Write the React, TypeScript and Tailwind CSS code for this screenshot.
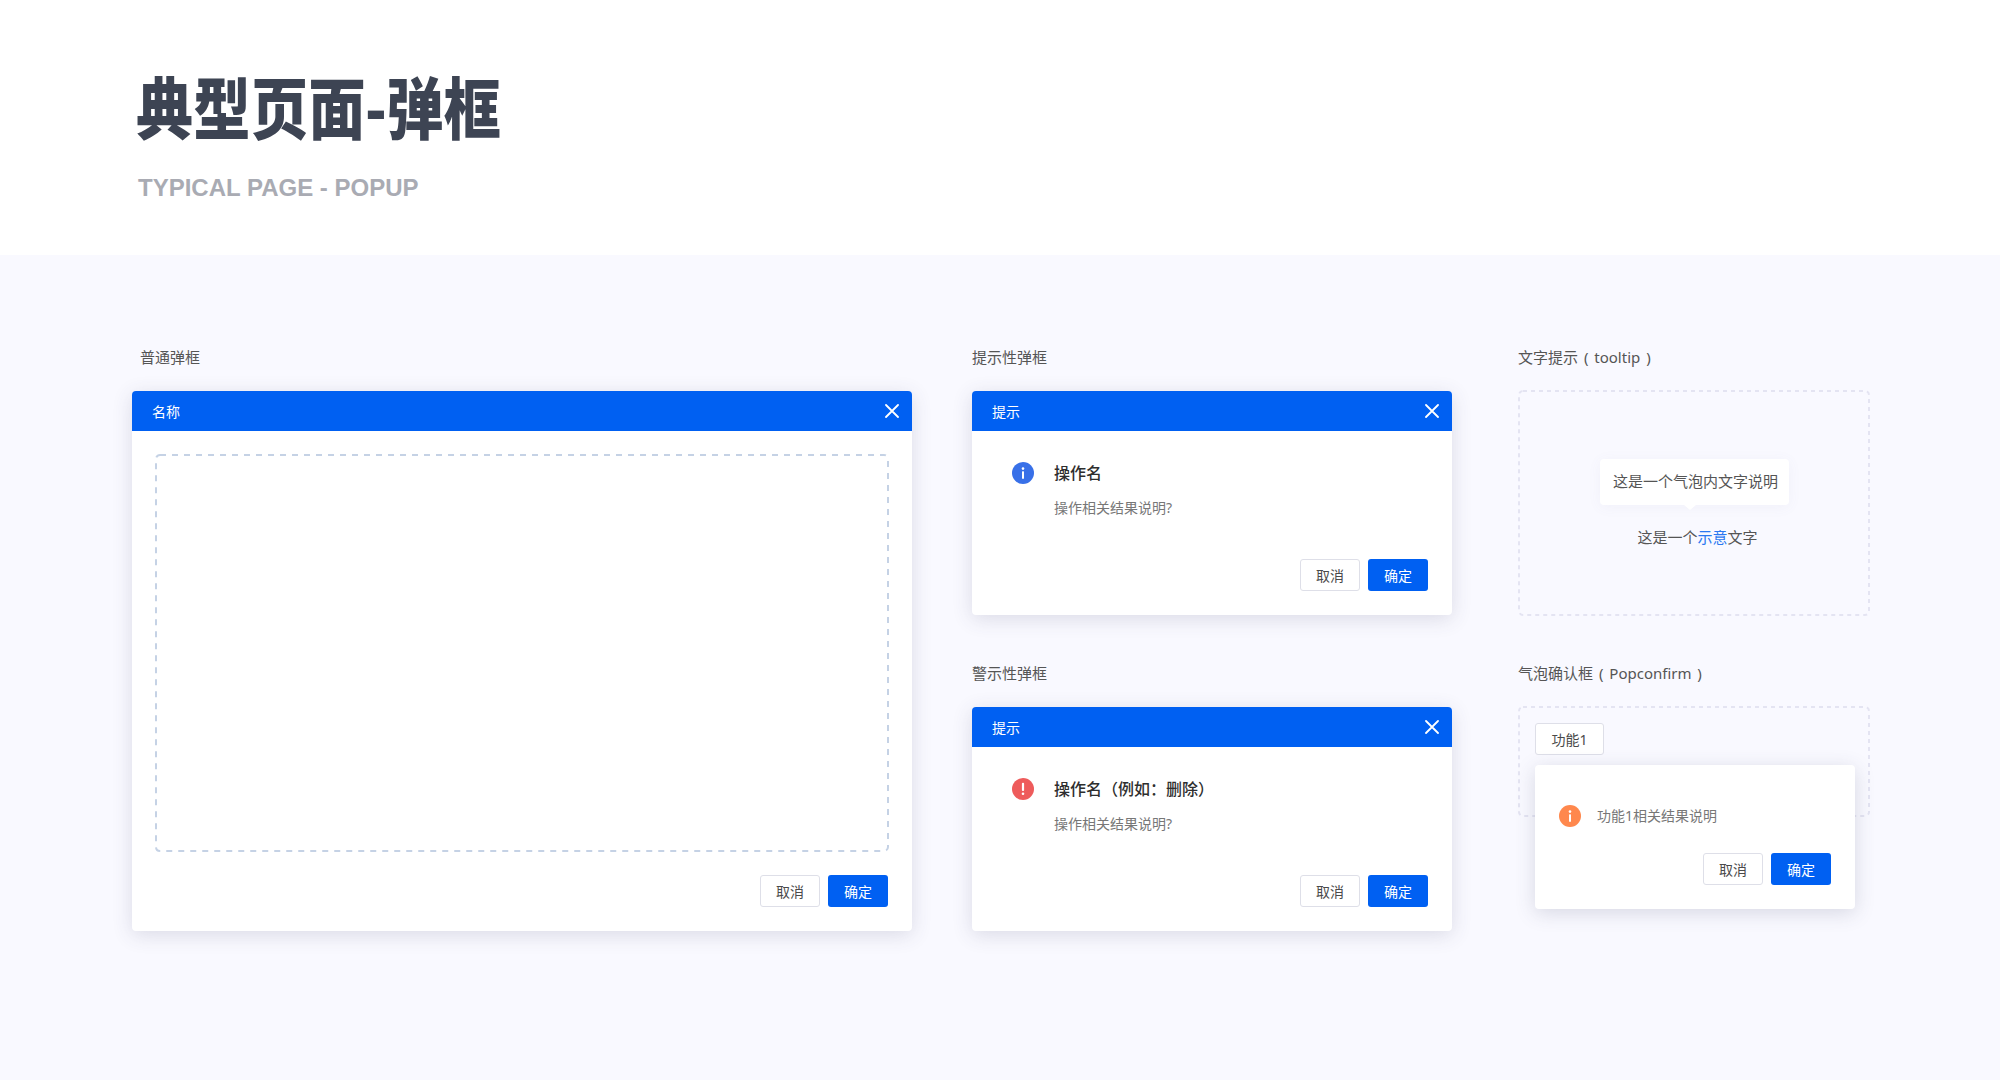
import React from "react";

const FONT = "font-['Noto_Sans','Noto_Sans_CJK_SC',sans-serif]";

function CloseIcon() {
  return (
    <svg width="14" height="14" viewBox="0 0 14 14" fill="none" className="block">
      <path d="M1 1L13 13M13 1L1 13" stroke="#ffffff" strokeWidth="1.8" strokeLinecap="round" />
    </svg>
  );
}

function DashedFrame({ w, h, color, dash }: { w: number; h: number; color: string; dash: string }) {
  return (
    <svg width={w} height={h} className="pointer-events-none absolute left-0 top-0 block" fill="none">
      <rect x="1" y="1" width={w - 2} height={h - 2} rx="4" stroke={color} strokeWidth="2" strokeDasharray={dash} />
    </svg>
  );
}

function Cancel() {
  return (
    <button className="h-8 w-[60px] rounded-[3px] border border-[#dedfe8] bg-white pt-[1px] text-[14px] leading-none text-[#4a4a4a]">
      取消
    </button>
  );
}

function Ok() {
  return (
    <button className="h-8 w-[60px] rounded-[3px] bg-[#0060f2] pt-[1px] text-[14px] leading-none text-white">
      确定
    </button>
  );
}

function Actions() {
  return (
    <div className="flex justify-end gap-2">
      <Cancel />
      <Ok />
    </div>
  );
}

function RoundIcon({ color, mark }: { color: string; mark: "i" | "!" }) {
  return (
    <svg width="22" height="22" viewBox="0 0 22 22" className="block shrink-0">
      <circle cx="11" cy="11" r="11" fill={color} />
      {mark === "i" ? (
        <>
          <circle cx="11" cy="6.6" r="1.3" fill="#fff" />
          <rect x="10" y="9.2" width="2" height="7.6" rx="0.6" fill="#fff" />
        </>
      ) : (
        <>
          <rect x="9.9" y="4.8" width="2.2" height="8.2" rx="1" fill="#fff" />
          <circle cx="11" cy="15.8" r="1.3" fill="#fff" />
        </>
      )}
    </svg>
  );
}

function Modal({ title, className, children }: { title: string; className: string; children: React.ReactNode }) {
  return (
    <div
      className={`flex flex-col overflow-hidden rounded-[4px] bg-white shadow-[0_4px_20px_rgba(60,64,100,0.16)] ${className}`}
    >
      <div className="flex h-10 shrink-0 items-center justify-between bg-[#0060f2] pl-5 pr-[13px] text-[14px] text-white">
        <span>{title}</span>
        <CloseIcon />
      </div>
      {children}
    </div>
  );
}

function Label({ children, className = "" }: { children: React.ReactNode; className?: string }) {
  return (
    <div className={`h-6 text-[15px] leading-[22px] text-[#555555] [word-spacing:2px] ${className}`}>{children}</div>
  );
}

function Notice({ title, color, mark }: { title: string; color: string; mark: "i" | "!" }) {
  return (
    <Modal title="提示" className="h-[224px] w-[480px]">
      <div className="flex flex-1 flex-col justify-between pb-6 pr-6 pl-10 pt-[31px]">
        <div className="flex gap-[21px]">
          <RoundIcon color={color} mark={mark} />
          <div className="-ml-[1px]">
            <div className="text-[16px] font-medium leading-[22px] text-[#2e2e2e]">{title}</div>
            <div className="mt-[13px] text-[14px] leading-[22px] text-[#777777]">操作相关结果说明?</div>
          </div>
        </div>
        <Actions />
      </div>
    </Modal>
  );
}

export default function App() {
  return (
    <div className={`min-h-[1080px] w-[2000px] bg-[#f9f9ff] ${FONT}`}>
      <header className="h-[255px] bg-white pl-[136px] pt-[62px]">
        <h1 className="h-[92px] origin-top scale-y-[1.18] font-['Noto_Sans_CJK_SC',sans-serif] text-[57px] font-black leading-[72px] tracking-[0.5px] text-[#3d4453]">
          典型页面<span className="-mx-[1px]">-</span>弹框
        </h1>
        <p className="ml-[2px] mt-[20px] font-['Liberation_Sans',sans-serif] text-[24px] font-bold leading-7 text-[#a9abb3]">
          TYPICAL PAGE - POPUP
        </p>
      </header>

      <main className="flex pl-[132px] pt-[91px]">
        <section className="w-[780px]">
          <Label className="mb-[21px] pl-2">普通弹框</Label>
          <Modal title="名称" className="h-[540px] w-[780px]">
            <div className="flex flex-1 flex-col pb-6 pl-[23px] pr-[23px] pt-[23px]">
              <div className="relative h-[398px]">
                <DashedFrame w={734} h={398} color="#c5d2e5" dash="6 6" />
              </div>
              <div className="mr-[1px] mt-auto">
                <Actions />
              </div>
            </div>
          </Modal>
        </section>

        <section className="ml-[60px] w-[480px]">
          <Label className="mb-[21px]">提示性弹框</Label>
          <Notice title="操作名" color="#3870e8" mark="i" />
          <Label className="mb-[21px] mt-[47px]">警示性弹框</Label>
          <Notice title="操作名（例如：删除）" color="#ee5b5b" mark="!" />
        </section>

        <section className="ml-[66px] w-[352px]">
          <Label className="mb-5">文字提示 ( tooltip )</Label>
          <div className="relative flex h-[226px] flex-col items-center justify-center">
            <DashedFrame w={352} h={226} color="#e4e4f2" dash="4 4" />
            <div className="relative flex h-[46px] w-[189px] items-center justify-center rounded-[4px] bg-white pl-[3px] text-[15px] text-[#555555] shadow-[0_2px_14px_rgba(100,110,160,0.06)]">
              这是一个气泡内文字说明
              <span className="absolute -bottom-[5px] left-[84px] h-0 w-0 border-x-[6px] border-t-[5px] border-x-transparent border-t-white" />
            </div>
            <div className="ml-[7px] mt-[21px] text-[15px] leading-[22px] text-[#555555]">
              这是一个<span className="text-[#2a78f0]">示意</span>文字
            </div>
          </div>

          <Label className="mb-5 mt-[46px]">气泡确认框 ( Popconfirm )</Label>
          <div className="relative h-[111px] pl-[17px] pt-[17px]">
            <DashedFrame w={352} h={111} color="#e4e4f2" dash="4 4" />
            <button className="relative block h-8 w-[69px] rounded-[3px] border border-[#dedfe8] bg-white pt-[1px] text-[14px] leading-none text-[#4a4a4a]">
              功能1
            </button>
            <div className="absolute left-[17px] top-[59px] flex h-[144px] w-[320px] flex-col rounded-[4px] bg-white pb-6 pl-6 pr-6 pt-10 shadow-[0_4px_20px_rgba(60,64,100,0.18)]">
              <div className="flex items-center gap-[16px]">
                <RoundIcon color="#ff884d" mark="i" />
                <span className="text-[14px] leading-[22px] text-[#777777]">功能1相关结果说明</span>
              </div>
              <div className="mt-auto">
                <Actions />
              </div>
            </div>
          </div>
        </section>
      </main>
    </div>
  );
}
